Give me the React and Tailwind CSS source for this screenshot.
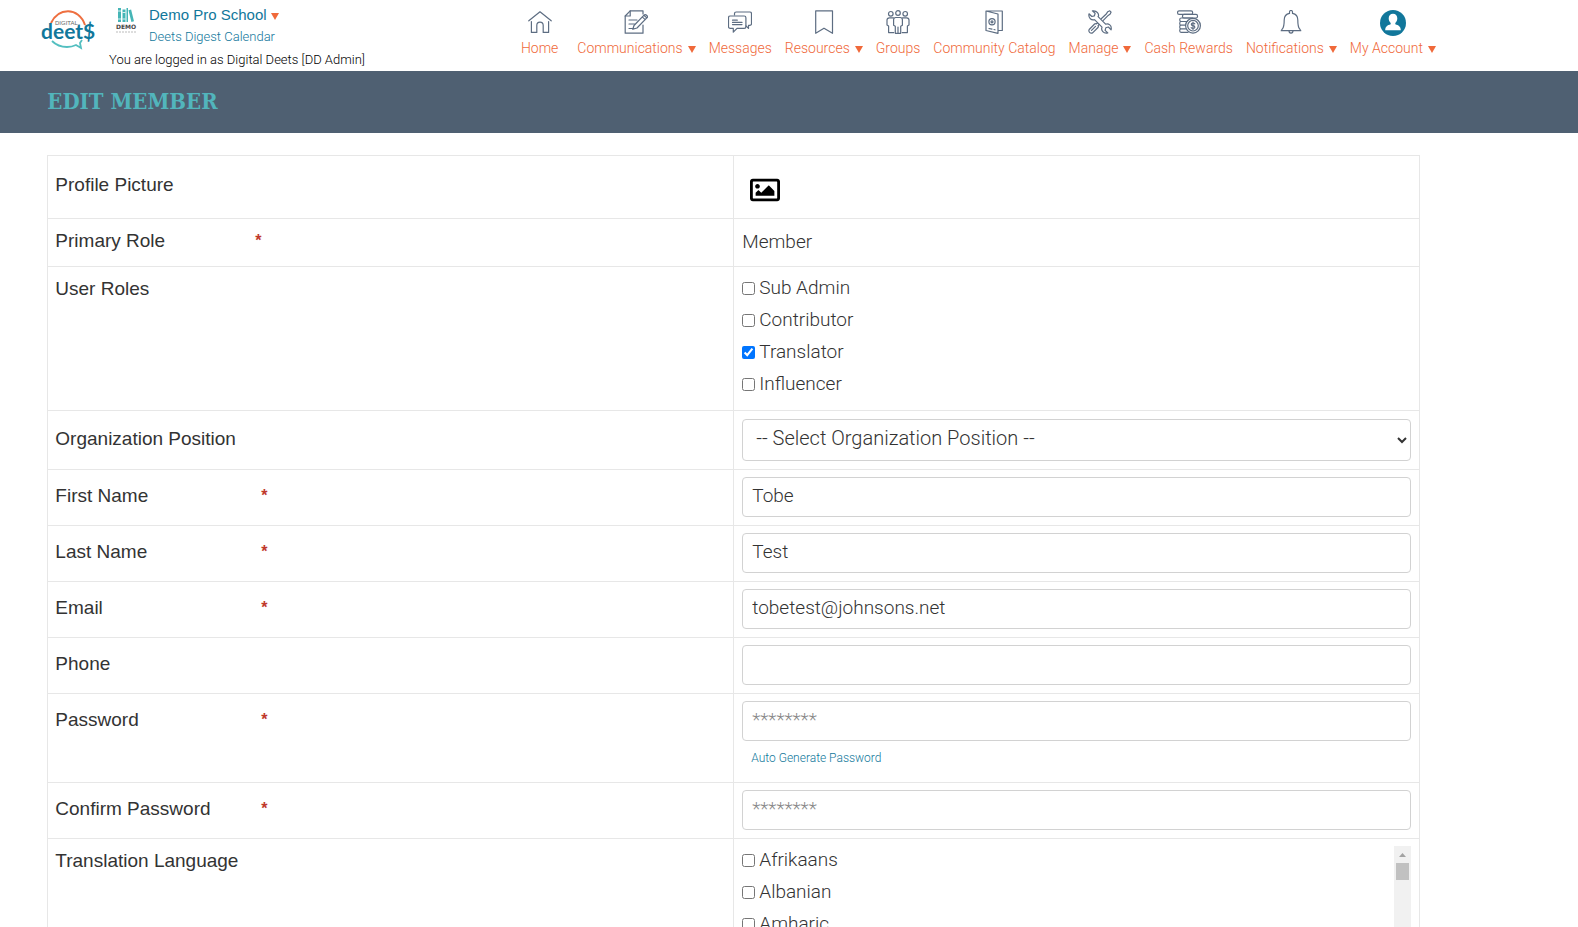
/*
  EditMember - Admin form for editing a single member of an organization.
  Top navigation, page title bar and the member details table.
*/
import { useState } from 'react';
import { FaRegImage } from 'react-icons/fa';

const LIGHT = "font-['Roboto','Liberation_Sans',sans-serif] font-light";

const NAV_ITEMS = [
  { name: 'Home', icon: HomeIcon },
  { name: 'Communications', icon: NoteIcon, menu: true },
  { name: 'Messages', icon: ChatIcon },
  { name: 'Resources', icon: BookmarkIcon, menu: true },
  { name: 'Groups', icon: PeopleIcon },
  { name: 'Community Catalog', icon: CatalogIcon },
  { name: 'Manage', icon: ToolsIcon, menu: true },
  { name: 'Cash Rewards', icon: CoinsIcon },
  { name: 'Notifications', icon: BellIcon, menu: true },
  { name: 'My Account', icon: AccountIcon, menu: true },
];

const ROLES = ['Sub Admin', 'Contributor', 'Translator', 'Influencer'];
const LANGUAGES = ['Afrikaans', 'Albanian', 'Amharic', 'Arabic', 'Armenian'];

function Icon({ children }) {
  return (
    <svg
      viewBox="0 0 24 24"
      className="h-6 w-6"
      fill="none"
      stroke="#5d6d82"
      strokeWidth="1.2"
      strokeLinecap="round"
      strokeLinejoin="round"
      aria-hidden="true"
    >
      {children}
    </svg>
  );
}

function HomeIcon() {
  return (
    <Icon>
      <path d="M.8 10.8 12 1.8l11.2 9" />
      <path d="M3.4 11.5v10.9h5.4v-7a3.2 3.2 0 0 1 6.4 0v7h5.4V11.5" />
    </Icon>
  );
}

function NoteIcon() {
  return (
    <Icon>
      <path d="M19 4V.8H6.2L1.2 6v17.2H19V15" />
      <path d="M6.2.8V6h-5M5 10h8M5 14h5.5M5 18.500h5" />
      <path d="m10 15.500 9.800-10.200 3 2.600L13 18l-4.200 1.300zM18.200 6.900l3 2.700M19.800 5.300q1.500-1.300 3 .2t0 2.400" />
    </Icon>
  );
}

function ChatIcon() {
  return (
    <Icon>
      <path d="M6.500 5V3.600Q6.500 2 8.200 2h13.600q1.700 0 1.700 1.700v10q0 1.700-1.700 1.700h-1.300v3L18 16" />
      <path d="M2.200 6h14q1.700 0 1.700 1.700v9q0 1.700-1.700 1.700H9l-3.700 3.800v-3.800H2.200Q.5 18.400.5 16.700v-9Q.5 6 2.200 6z" />
      <path d="M4.500 10.200h4.800M4.500 12.400h9.500M4.500 14.600h9.500" />
    </Icon>
  );
}

function BookmarkIcon() {
  return (
    <Icon>
      <path d="M3.700.8h16.800v22.500L12 18.200l-8.300 5.100z" />
    </Icon>
  );
}

function PeopleIcon() {
  return (
    <Icon>
      <circle cx="4.800" cy="3.800" r="2.300" />
      <circle cx="12" cy="3" r="2.300" />
      <circle cx="19.200" cy="3.800" r="2.300" />
      <path d="M9.800 7.500h4.400q2.200 0 2.200 2.300v5.500l-1.700 1v7H9.300v-7l-1.700-1V9.800q0-2.300 2.200-2.300zM12 17v6" />
      <path d="M7.500 7.800H3.400q-2.400 0-2.400 2.300v5l1.600 1v6.500h5.200M16.500 7.800h4.100q2.400 0 2.400 2.300v5l-1.600 1v6.500h-5.200" />
    </Icon>
  );
}

function CatalogIcon() {
  return (
    <Icon>
      <path d="m4 1 12 3v19.300L4 20.500zM4 1h16.300v19.500H16" />
      <circle cx="10" cy="11.800" r="3.100" />
      <circle cx="10" cy="11.800" r="1" />
      <path d="M7 18.500l3 .7M12 19.500l1 .3" />
    </Icon>
  );
}

function ToolsIcon() {
  return (
    <Icon>
      <path d="M1 3.800 3.800 6.500l2.600-.7.700-2.500L4.400.9q3.300-.6 5.100 1.700t.6 4.100l7.500 7.500q2.200-.9 4.200.7t1.300 4.900L20.400 17l-2.600.8-.7 2.600 2.700 2.500q-3.200.7-5-1.300t-.8-4.400L6.500 9.700q-2.300.8-4.200-.9T1 3.800z" />
      <path d="m13.500 8.500 5-4.800 1.300-2 2-.9 1.300 1.300-.9 2-2 1.300-4.900 5M9.500 13l-1.300 1q-1-.6-1.600 0L1.200 19.500q-.8 1.700.4 2.900t3 .5L10 17.500q.7-1 .1-1.800l1-1.200M3.500 20.300l4-4" />
    </Icon>
  );
}

function CoinsIcon() {
  return (
    <Icon>
      <rect x=".6" y=".8" width="15" height="3.600" rx="1.500" />
      <rect x="5.500" y="4.400" width="15" height="3.600" rx="1.500" />
      <path d="M10 11.500H4q-1.300 0-1.300-1.700T4 8h11.500M8.500 15.200H4q-1.300 0-1.300-1.800T4 11.500M8.500 18.800H4q-1.300 0-1.300-1.800T4 15.200M11 22.400H4q-1.300 0-1.300-1.800T4 18.800" />
      <circle cx="16" cy="15.700" r="7.400" />
      <circle cx="16" cy="15.700" r="5.300" />
      <path d="M17.800 13.800q-.6-.8-1.800-.8-1.700 0-1.700 1.300t1.700 1.400 1.800 1.400-1.800 1.400q-1.200 0-1.900-.9M16 12v7.400" />
    </Icon>
  );
}

function BellIcon() {
  return (
    <Icon>
      <path d="M10.500 3.400V2a1.500 1.500 0 0 1 3 0v1.400q5.300 1 5.300 6.600 0 7 1.800 8.800l1.200 1.900H2.200l1.200-1.900Q5.200 17 5.200 10q0-5.600 5.300-6.600zM10 20.800a2 2.300 0 0 0 4 0" />
    </Icon>
  );
}

function AccountIcon() {
  return (
    <svg viewBox="0 0 26 26" className="h-[26px] w-[26px]" aria-hidden="true">
      <circle cx="13" cy="13" r="13" fill="#11779b" />
      <path
        d="M13 3.800c2.600 0 4.300 1.800 4.300 4.500 0 2-.8 3.700-2 4.700v1.200c3.200 1 5.500 2.100 5.500 6H5.200c0-3.900 2.300-5 5.500-6V13c-1.200-1-2-2.700-2-4.700 0-2.700 1.700-4.500 4.300-4.500z"
        fill="#fff"
      />
    </svg>
  );
}

function Caret() {
  return (
    <svg viewBox="0 0 8 7" className="mt-[3px] h-[7px] w-2 fill-[#f0693a]" aria-hidden="true">
      <path d="M0 0h8L4 7z" />
    </svg>
  );
}

function DeetsLogo() {
  return (
    <svg viewBox="0 0 54 42" className="h-[42px] w-[54px]" role="img" aria-label="Digital Deets">
      <path d="M10 14C14 6 20 2.300 27 2.300S41 7 44 16" fill="none" stroke="#ee6f40" strokeWidth="2" />
      <path d="M11 32q6 6 15 6 5 0 9-2l5 3-1-5 2-3" fill="none" stroke="#53bfc0" strokeWidth="1.800" />
      <text x="14" y="16" fontSize="6" fill="#666" fontFamily="Liberation Sans">DIGITAL</text>
      <text x="0" y="30" fontSize="21" fontWeight="bold" fill="#11779b" fontFamily="Lato">deet$</text>
    </svg>
  );
}

function DemoLogo() {
  return (
    <svg viewBox="0 0 22 27" className="h-[27px] w-[22px]" role="img" aria-label="Demo">
      <path d="M3 1h3v14H3zM7.500 2.500h3V15h-3zM11.500 1H13v14h-1.500zM13.500 3.300l2.600-.8L19 14.300l-2.600.7z" fill="#45b5b6" />
      <path d="M3 4h3M7.500 5.500h3M3 12h3M7.500 12h3" stroke="#fff" strokeWidth=".8" />
      <text x="11" y="22" fontSize="6" fontWeight="bold" fill="#444" fontFamily="DejaVu Sans" textAnchor="middle">DEMO</text>
      <path d="M1 25h20" stroke="#bbb" strokeDasharray="2 1" />
    </svg>
  );
}

function Header() {
  return (
    <header className="flex h-[71px] items-start justify-between pr-[9%] pl-[41px]">
      <div className="flex gap-[14px]">
        <a href="#home" className="pt-[9px]">
          <DeetsLogo />
        </a>
        <div>
          <div className="flex gap-3 pt-[7px] pl-[6px]">
            <DemoLogo />
            <div className="text-[#11779b]">
              <button type="button" className="flex items-center gap-1 text-[15px] leading-4">
                Demo Pro School <Caret />
              </button>
              <a href="#calendar" className={`${LIGHT} mt-[6px] block text-[13px] leading-4`}>
                Deets Digest Calendar
              </a>
            </div>
          </div>
          <p className={`${LIGHT} mt-[7px] text-[13px] leading-4 text-black`}>
            You are logged in as Digital Deets [DD Admin]
          </p>
        </div>
      </div>
      <nav className="flex gap-[13px] pt-[10px]">
        {NAV_ITEMS.map((item) => (
          <a
            key={item.name}
            href="#nav"
            className={`${LIGHT} flex flex-col items-center text-[14px] leading-5 whitespace-nowrap text-[#f0693a] first:mr-[6px]`}
          >
            <span className="flex h-7 items-start">
              <item.icon />
            </span>
            <span className="flex items-center gap-[5px]">
              {item.name}
              {item.menu && <Caret />}
            </span>
          </a>
        ))}
      </nav>
    </header>
  );
}

function Row({ label, htmlFor, required, labelClass = 'leading-9', labelWidth = 'min-w-[206px]', children }) {
  return (
    <tr className="border border-[#e7e7e7]">
      <th scope="row" className="w-1/2 border-r border-[#e7e7e7] px-[7px] pt-2 pb-[7px] text-left align-top font-normal">
        <div className={`flex text-[19px] ${labelClass}`}>
          <label htmlFor={htmlFor} className={labelWidth}>{label}</label>
          {required && <span className="text-[16px] font-bold text-[#c0392b]">*</span>}
        </div>
      </th>
      <td className={`${LIGHT} w-1/2 px-2 pt-[7px] pb-2 align-top text-[19px]`}>{children}</td>
    </tr>
  );
}

function TextField({ id, ...props }) {
  return (
    <input
      id={id}
      className="block h-10 w-full rounded border border-[#d2d2d2] px-[9px] pb-1 text-[19px] placeholder:text-[#888]"
      {...props}
    />
  );
}

function CheckList({ items, selected, onToggle }) {
  return (
    <div className="flex flex-col gap-1">
      {items.map((item) => (
        <label key={item} className="flex items-center gap-1 leading-7">
          <input
            type="checkbox"
            className="h-[13px] w-[13px]"
            checked={selected.includes(item)}
            onChange={() => onToggle(item)}
          />
          {item}
        </label>
      ))}
    </div>
  );
}

export default function App() {
  const [roles, setRoles] = useState(['Translator']);
  const [languages, setLanguages] = useState([]);

  const toggle = (setter) => (item) =>
    setter((prev) => (prev.includes(item) ? prev.filter((i) => i !== item) : [...prev, item]));

  return (
    <div className="h-screen overflow-hidden bg-white font-['Liberation_Sans',Arial,sans-serif] text-[#333]">
      <Header />
      <div className="h-[62px] bg-[#4f6072] px-[3%] pt-[14px]">
        <h1 className="font-['DejaVu_Serif_Condensed','DejaVu_Serif',serif] text-[22px] leading-8 font-bold text-[#52b5bc]">
          EDIT MEMBER
        </h1>
      </div>

      <form className="mt-[22px] ml-[3%] w-[87%]">
        <table className="w-full table-fixed border-collapse">
          <tbody>
            <Row label="Profile Picture" labelClass="leading-[42px]">
              <button type="button" aria-label="Change picture" className="block px-2 pt-3 pb-[5px]">
                <FaRegImage className="h-[30px] w-[30px] text-black" />
              </button>
            </Row>
            <Row label="Primary Role" required labelClass="leading-7" labelWidth="min-w-[200px]">
              <p className="leading-8">Member</p>
            </Row>
            <Row label="User Roles" labelClass="leading-7">
              <div className="pb-1">
                <CheckList items={ROLES} selected={roles} onToggle={toggle(setRoles)} />
              </div>
            </Row>
            <Row label="Organization Position" htmlFor="position" labelClass="leading-10">
              <select
                id="position"
                className="mt-px block h-[42px] w-full rounded border border-[#d2d2d2] bg-white pb-1 pl-[9px] text-[20px]"
              >
                <option>-- Select Organization Position --</option>
              </select>
            </Row>
            <Row label="First Name" htmlFor="first" required>
              <TextField id="first" type="text" defaultValue="Tobe" />
            </Row>
            <Row label="Last Name" htmlFor="last" required>
              <TextField id="last" type="text" defaultValue="Test" />
            </Row>
            <Row label="Email" htmlFor="email" required>
              <TextField id="email" type="email" defaultValue="tobetest@johnsons.net" />
            </Row>
            <Row label="Phone" htmlFor="phone">
              <TextField id="phone" type="tel" />
            </Row>
            <Row label="Password" htmlFor="password" required>
              <TextField id="password" type="password" placeholder="********" />
              <button type="button" className="mt-[9px] mb-2 ml-[9px] block text-[12px] leading-4 text-[#11779b]">
                Auto Generate Password
              </button>
            </Row>
            <Row label="Confirm Password" htmlFor="confirm" required>
              <TextField id="confirm" type="password" placeholder="********" />
            </Row>
            <Row label="Translation Language" labelClass="leading-7">
              <div className="flex justify-between">
                <CheckList items={LANGUAGES} selected={languages} onToggle={toggle(setLanguages)} />
                <div className="flex w-[17px] flex-col items-center bg-[#f1f1f1]">
                  <span className="flex h-[17px] items-center">
                    <svg viewBox="0 0 7 4" className="h-1 w-[7px] fill-[#a3a3a3]" aria-hidden="true">
                      <path d="M0 4h7L3.500 0z" />
                    </svg>
                  </span>
                  <span className="h-[17px] w-[13px] bg-[#c1c1c1]" />
                </div>
              </div>
            </Row>
          </tbody>
        </table>
      </form>
    </div>
  );
}
